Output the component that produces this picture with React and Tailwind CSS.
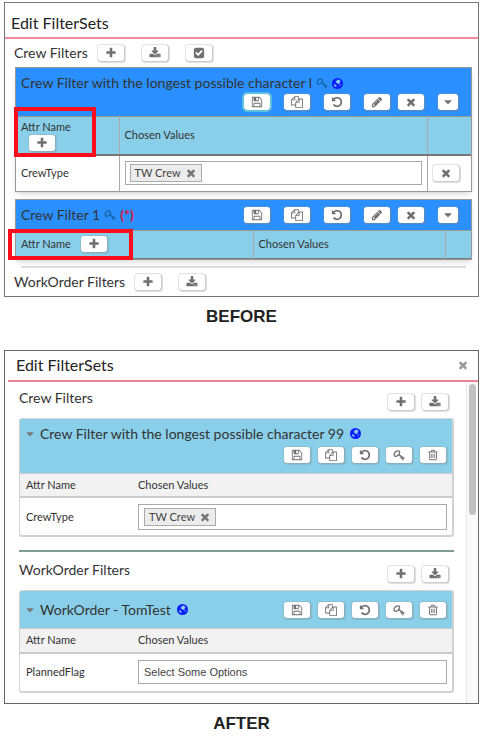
import clsx from "clsx";

const ICONS = {
  plus: "M1600 736v192q0 40-28 68t-68 28h-416v416q0 40-28 68t-68 28h-192q-40 0-68-28t-28-68v-416h-416q-40 0-68-28t-28-68v-192q0-40 28-68t68-28h416v-416q0-40 28-68t68-28h192q40 0 68 28t28 68v416h416q40 0 68 28t28 68z",
  close: "M1490 1322q0 40-28 68l-136 136q-28 28-68 28t-68-28l-294-294-294 294q-28 28-68 28t-68-28l-136-136q-28-28-28-68t28-68l294-294-294-294q-28-28-28-68t28-68l136-136q28-28 68-28t68 28l294 294 294-294q28-28 68-28t68 28l136 136q28 28 28 68t-28 68l-294 294 294 294q28 28 28 68z",
  download: "M1344 1344q0-26-19-45t-45-19-45 19-19 45 19 45 45 19 45-19 19-45zm256 0q0-26-19-45t-45-19-45 19-19 45 19 45 45 19 45-19 19-45zm128-224v320q0 40-28 68t-68 28h-1472q-40 0-68-28t-28-68v-320q0-40 28-68t68-28h465l135 136q58 56 136 56t136-56l136-136h464q40 0 68 28t28 68zm-325-569q17 41-14 70l-448 448q-18 19-45 19t-45-19l-448-448q-31-29-14-70 17-39 59-39h256v-448q0-26 19-45t45-19h256q26 0 45 19t19 45v448h256q42 0 59 39z",
  save: "M512 1536h768v-384h-768v384zm896 0h128v-896q0-14-10-38.500t-20-34.500l-281-281q-10-10-34-20t-39-10v416q0 40-28 68t-68 28h-576q-40 0-68-28t-28-68v-416h-128v1280h128v-416q0-40 28-68t68-28h832q40 0 68 28t28 68v416zm-384-928v-320q0-13-9.500-22.500t-22.500-9.500h-192q-13 0-22.500 9.500t-9.500 22.500v320q0 13 9.500 22.500t22.500 9.500h192q13 0 22.500-9.500t9.500-22.500zm640 32v928q0 40-28 68t-68 28h-1344q-40 0-68-28t-28-68v-1344q0-40 28-68t68-28h928q40 0 88 20t76 48l280 280q28 28 48 76t20 88z",
  copy: "M1696 384q40 0 68 28t28 68v1216q0 40-28 68t-68 28h-960q-40 0-68-28t-28-68v-288h-544q-40 0-68-28t-28-68v-672q0-40 20-88t48-76l408-408q28-28 76-48t88-20h416q40 0 68 28t28 68v328q68-40 128-40h416zm-544 213l-299 299h299v-299zm-640-384l-299 299h299v-299zm196 647l316-316v-416h-384v416q0 40-28 68t-68 28h-416v640h512v-256q0-40 20-88t48-76zm956 804v-1152h-384v416q0 40-28 68t-68 28h-416v640h896z",
  undo: "M1664 896q0 156-61 298t-164 245-245 164-298 61q-172 0-327-72.500t-264-204.500q-7-10-6.500-22.500t8.500-20.500l137-138q10-9 25-9 16 2 23 12 73 95 179 147t225 52q104 0 198.500-40.500t163.500-109.500 109.500-163.500 40.500-198.500-40.500-198.500-109.500-163.500-163.500-109.500-198.500-40.500q-98 0-188 35.500t-160 101.500l137 138q31 30 14 69-17 40-59 40h-448q-26 0-45-19t-19-45v-448q0-42 40-59 39-17 69 14l130 129q107-101 244.500-156.500t284.500-55.500q156 0 298 61t245 164 164 245 61 298z",
  pencil: "M491 1536l91-91-235-235-91 91v107h128v128h107zm523-928q0-22-22-22-10 0-17 7l-542 542q-7 7-7 17 0 22 22 22 10 0 17-7l542-542q7-7 7-17zm-54-192l416 416-832 832h-416v-416zm683 96q0 53-37 90l-166 166-416-416 166-165q36-38 90-38 53 0 91 38l235 234q37 39 37 91z",
  check: "M813 1299l614-614q19-19 19-45t-19-45l-102-102q-19-19-45-19t-45 19l-467 467-211-211q-19-19-45-19t-45 19l-102 102q-19 19-19 45t19 45l358 358q19 19 45 19t45-19zm851-883v960q0 119-84.500 203.500t-203.500 84.500h-960q-119 0-203.500-84.500t-84.500-203.500v-960q0-119 84.500-203.500t203.500-84.500h960q119 0 203.500 84.500t84.500 203.500z",
  trash: "M704 736v576q0 14-9 23t-23 9h-64q-14 0-23-9t-9-23v-576q0-14 9-23t23-9h64q14 0 23 9t9 23zm256 0v576q0 14-9 23t-23 9h-64q-14 0-23-9t-9-23v-576q0-14 9-23t23-9h64q14 0 23 9t9 23zm256 0v576q0 14-9 23t-23 9h-64q-14 0-23-9t-9-23v-576q0-14 9-23t23-9h64q14 0 23 9t9 23zm128 724v-948h-896v948q0 22 7 40.500t14.500 27 10.500 8.500h832q3 0 10.500-8.500t14.500-27 7-40.500zm-672-1076h448l-48-117q-7-9-17-11h-317q-10 2-17 11zm928 32v64q0 14-9 23t-23 9h-96v948q0 83-47 143.500t-113 60.500h-832q-66 0-113-58.500t-47-141.500v-952h-96q-14 0-23-9t-9-23v-64q0-14 9-23t23-9h309l70-167q15-37 54-63t79-26h320q40 0 79 26t54 63l70 167h309q14 0 23 9t9 23z",
  caret: "M1408 704q0 26-19 45l-448 448q-19 19-45 19t-45-19l-448-448q-19-19-19-45t19-45 45-19h896q26 0 45 19t19 45z",
};

function Icon({ name, className }) {
  if (name === "key") {
    return (
      <svg viewBox="0 0 16 16" className={className} fill="none" stroke="currentColor" strokeWidth="1.800" aria-hidden="true">
        <path d="M1.500 8.500C1 5 4 2 7.500 2.500C9.500 3 9 5.500 7.500 7.500C5.500 10 2 10.500 1.500 8.500Z" />
        <path d="M7.500 7.500L15 12.500M11.500 10.500L10.500 13M14 12L12.500 15" />
      </svg>
    );
  }
  return (
    <svg viewBox="0 0 1792 1792" className={className} fill="currentColor" aria-hidden="true">
      <path d={ICONS[name]} />
    </svg>
  );
}

function Globe() {
  return (
    <svg viewBox="0 0 20 20" className="size-[11px] shrink-0" role="img" aria-label="Global">
      <circle cx="10" cy="10" r="10" fill="#0a1eff" />
      <path d="M9 3l4 0 3 3-2 1 0 3-3 1-2-2-2-1 0-2 2-1zM4 11l4 2 0 3-2 0-2-2zM14 12l2-1-1 3-1 0z" fill="#8fd0f0" />
    </svg>
  );
}

function IconButton({ icon, label, narrow, focused }) {
  return (
    <button
      type="button"
      aria-label={label}
      className={clsx(
        "flex h-4 shrink-0 items-center justify-center rounded-[3px] bg-white text-[#707070] shadow-[0_0_0_1px_rgba(150,150,150,0.25),1px_1px_1px_1px_rgba(120,120,120,0.25)]",
        narrow ? "w-5" : "w-[26px]",
        focused && "outline-2 outline-[#5cc0dc]",
      )}
    >
      <Icon name={icon} className="size-3" />
    </button>
  );
}

function Chip() {
  return (
    <span className="flex h-[18px] items-center gap-1 border border-[#aaa] bg-[#ececec] px-1 text-[11px] text-[#444]">
      TW Crew
      <button type="button" aria-label="Remove TW Crew">
        <Icon name="close" className="size-3 text-[#777]" />
      </button>
    </span>
  );
}

function BeforeActions({ saveFocused }) {
  return (
    <div className="flex items-center pr-[13px]">
      <div className="flex gap-[14px]">
        <IconButton icon="save" label="Save" focused={saveFocused} />
        <IconButton icon="copy" label="Copy" />
        <IconButton icon="undo" label="Undo" />
        <IconButton icon="pencil" label="Edit" />
      </div>
      <div className="ml-2 flex gap-[14px]">
        <IconButton icon="close" label="Remove" />
        <IconButton icon="caret" label="More" narrow />
      </div>
    </div>
  );
}

function AfterActions() {
  return (
    <div className="flex gap-2 pr-[6px]">
      <IconButton icon="save" label="Save" />
      <IconButton icon="copy" label="Copy" />
      <IconButton icon="undo" label="Undo" />
      <IconButton icon="key" label="Key" />
      <IconButton icon="trash" label="Delete" />
    </div>
  );
}

function BeforePanel() {
  return (
    <section className="border border-[#777] bg-white">
      <h2 className="flex h-[36px] items-center border-b-2 border-[#f58a9b] pt-[6px] pl-[6px] text-base text-[#222]">
        Edit FilterSets
      </h2>
      <div className="flex h-7 items-center pl-[9px]">
        <h3 className="mr-[10px] text-sm">Crew Filters</h3>
        <div className="flex gap-[18px]">
          <IconButton icon="plus" label="Add crew filter" />
          <IconButton icon="download" label="Import crew filter" />
          <IconButton icon="check" label="Select crew filters" />
        </div>
      </div>

      <div className="mr-[6px] ml-[10px] border border-[#999] shadow-md">
        <div className="flex h-12 flex-col bg-[#2a90ff]">
          <div className="flex h-[26px] items-center gap-1 pt-1 pl-[5px] text-sm">
            Crew Filter with the longest possible character l
            <Icon name="key" className="size-3 text-[#1765a8]" />
            <Globe />
          </div>
          <div className="flex justify-end">
            <BeforeActions saveFocused />
          </div>
        </div>
        <table className="w-full table-fixed border-collapse text-left text-[11px]">
          <colgroup>
            <col className="w-[103px]" />
            <col />
            <col className="w-11" />
          </colgroup>
          <thead className="border-t border-b-2 border-t-[#999] border-b-[#777] bg-[#8acfea]">
            <tr className="h-[38px]">
              <th className="relative border-r border-[#aaa] pl-[5px] font-normal">
                <span className="block leading-4">Attr Name</span>
                <span className="block pl-2">
                  <IconButton icon="plus" label="Add attribute" />
                </span>
                <span className="absolute -top-[10px] -left-[2px] h-[50px] w-[82px] border-4 border-[#fb0d1b]" />
              </th>
              <th className="border-r border-[#aaa] pl-[5px] font-normal">Chosen Values</th>
              <th />
            </tr>
          </thead>
          <tbody>
            <tr className="h-9">
              <td className="border-r border-[#aaa] pl-[5px]">CrewType</td>
              <td className="border-r border-[#aaa] px-[5px]">
                <div className="flex h-6 items-center border border-[#aaa] pl-1">
                  <Chip />
                </div>
              </td>
              <td className="pl-[5px]">
                <IconButton icon="close" label="Remove CrewType" />
              </td>
            </tr>
          </tbody>
        </table>
      </div>

      <div className="mt-[7px] mr-[6px] ml-[10px] border border-[#999] shadow-md">
        <div className="flex h-[30px] items-center justify-between bg-[#2a90ff]">
          <div className="flex items-center gap-1 pl-[5px] text-sm">
            Crew Filter 1
            <Icon name="key" className="size-3 text-[#1765a8]" />
            <span className="font-bold text-[#d81338]">(*)</span>
          </div>
          <BeforeActions />
        </div>
        <table className="w-full table-fixed border-collapse text-left text-[11px]">
          <colgroup>
            <col />
            <col className="w-[192px]" />
            <col className="w-[26px]" />
          </colgroup>
          <thead className="border-t border-b border-t-[#999] border-b-[#777] bg-[#8acfea]">
            <tr className="h-7">
              <th className="relative border-r border-[#aaa] pl-[5px] font-normal">
                <span className="flex items-center gap-[10px]">
                  Attr Name
                  <IconButton icon="plus" label="Add attribute" />
                </span>
                <span className="absolute -top-[2px] -left-[8px] h-[31px] w-[125px] border-4 border-[#fb0d1b]" />
              </th>
              <th className="border-r border-[#aaa] pl-[5px] font-normal">Chosen Values</th>
              <th />
            </tr>
          </thead>
        </table>
      </div>

      <hr className="mt-[6px] mr-3 ml-4 border-t-2 border-[#ddd]" />
      <div className="flex h-7 items-center pl-[9px]">
        <h3 className="mr-[10px] text-sm">WorkOrder Filters</h3>
        <div className="flex gap-[18px]">
          <IconButton icon="plus" label="Add work order filter" />
          <IconButton icon="download" label="Import work order filter" />
        </div>
      </div>
    </section>
  );
}

function AfterSection({ title, children }) {
  return (
    <>
      <div className="flex h-9 items-start justify-between pr-[6px]">
        <h3 className="text-sm leading-8">{title}</h3>
        <div className="flex gap-2 pt-3">
          <IconButton icon="plus" label={`Add to ${title}`} />
          <IconButton icon="download" label={`Import ${title}`} />
        </div>
      </div>
      <div className="overflow-hidden rounded-[3px] border border-r-2 border-b-2 border-[#d2d2d2]">{children}</div>
    </>
  );
}

function AfterTable({ attr, children }) {
  return (
    <table className="w-full table-fixed border-collapse text-left text-[11px]">
      <colgroup>
        <col className="w-[118px]" />
        <col />
      </colgroup>
      <thead className="border-t border-b-2 border-[#ccc] bg-[#f2f2f2]">
        <tr className="h-6">
          <th className="pl-[6px] font-normal">Attr Name</th>
          <th className="font-normal">Chosen Values</th>
        </tr>
      </thead>
      <tbody>
        <tr className="h-[38px]">
          <td className="pl-[6px]">{attr}</td>
          <td className="pr-[5px]">{children}</td>
        </tr>
      </tbody>
    </table>
  );
}

function AfterPanel() {
  return (
    <section className="border border-[#666] bg-white">
      <div className="ml-[3px] flex h-[31px] items-center justify-between border-b-2 border-[#ea8393] pr-[9px] pl-2">
        <h2 className="text-base text-[#222]">Edit FilterSets</h2>
        <button type="button" aria-label="Close">
          <Icon name="close" className="size-3 text-[#999]" />
        </button>
      </div>
      <div className="flex">
        <div className="min-w-0 flex-1 pr-3 pb-[10px] pl-[14px]">
          <AfterSection title="Crew Filters">
            <div className="h-[54px] bg-[#8acfea]">
              <div className="flex h-7 items-center pt-[2px] pl-1 text-sm">
                <Icon name="caret" className="mr-1 size-3 text-[#777]" />
                Crew Filter with the longest possible character 99
                <span className="ml-[6px]">
                  <Globe />
                </span>
              </div>
              <div className="flex justify-end">
                <AfterActions />
              </div>
            </div>
            <AfterTable attr="CrewType">
              <div className="flex h-[26px] items-center border border-[#aaa] pl-[5px]">
                <Chip />
              </div>
            </AfterTable>
          </AfterSection>

          <hr className="mt-[13px] mb-[2px] border-t-2 border-[#7f9c93]" />

          <AfterSection title="WorkOrder Filters">
            <div className="flex h-[37px] items-center justify-between bg-[#8acfea]">
              <div className="flex items-center pl-1 text-sm">
                <Icon name="caret" className="mr-1 size-3 text-[#777]" />
                WorkOrder - TomTest
                <span className="ml-[6px]">
                  <Globe />
                </span>
              </div>
              <AfterActions />
            </div>
            <AfterTable attr="PlannedFlag">
              <input
                type="text"
                aria-label="PlannedFlag values"
                placeholder="Select Some Options"
                className="block h-6 w-full border border-[#aaa] pl-[5px] font-['Liberation_Sans',sans-serif] text-[11px] placeholder:text-[#444]"
              />
            </AfterTable>
          </AfterSection>
        </div>
        <div className="w-3 border-l border-[#e8e8e8] bg-[#fafafa] px-[2px] pt-[2px]">
          <div className="h-[131px] rounded-full bg-[#c1c1c1]" />
        </div>
      </div>
    </section>
  );
}

export default function App() {
  return (
    <main className="bg-white pt-[2px] pr-px pl-1 font-['Lato',sans-serif] leading-5 text-[#333]">
      <BeforePanel />
      <p className="mt-[10px] mb-[23px] text-center font-['Liberation_Sans',sans-serif] text-[17px] font-bold text-[#222]">
        BEFORE
      </p>
      <AfterPanel />
      <p className="mt-[10px] text-center font-['Liberation_Sans',sans-serif] text-[17px] font-bold text-[#222]">
        AFTER
      </p>
    </main>
  );
}
